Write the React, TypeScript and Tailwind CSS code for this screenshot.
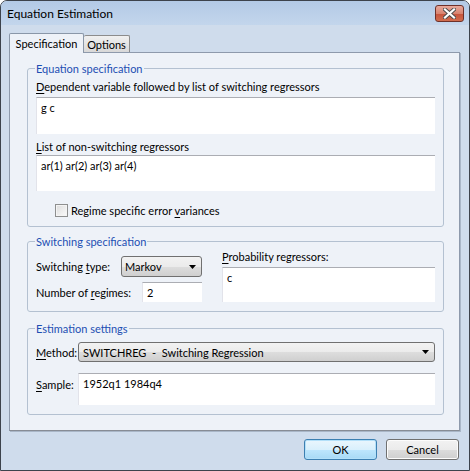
import React from 'react';

const FONT = "font-['Lato',sans-serif]";

function Edit({ className = '', text = '' }: { className?: string; text?: string }) {
    return (
        <div
            className={`whitespace-nowrap bg-white border-t border-l border-t-[#abadb3] border-l-[#e2e3ea] pl-[4px] pt-[2px] leading-[15px] text-[11px] text-black ${className}`}
        >
            {text}
        </div>
    );
}

function Combo({ className = '', text }: { className?: string; text: string }) {
    return (
        <div
            className={`flex items-center justify-between rounded-[3px] border border-[#707070] bg-[linear-gradient(#f2f2f2_0%,#ebebeb_50%,#dddddd_51%,#cfcfcf_100%)] pl-[3px] pr-[5px] text-[11px] leading-[15px] text-black ${className}`}
        >
            <span className="whitespace-pre">{text}</span>
            <svg width="7" height="4" viewBox="0 0 7 4" aria-hidden>
                <path d="M0 0H7L3.5 4Z" fill="#000" />
            </svg>
        </div>
    );
}

function Group({ title, className = '', children }: { title: string; className?: string; children: React.ReactNode }) {
    return (
        <fieldset className={`w-[417px] rounded-[3px] border border-[#b4c1d1] px-[8px] ${className}`}>
            <legend className="-ml-[1px] px-[1px] whitespace-nowrap text-[11px] leading-[15px] text-[#1d4fb3]">{title}</legend>
            {children}
        </fieldset>
    );
}

function Button({ label, isDefault = false }: { label: string; isDefault?: boolean }) {
    return (
        <button
            type="button"
            className={[
                'flex h-[21px] w-[73px] items-center justify-center rounded-[3px] border text-[11px] leading-[15px] text-black',
                isDefault
                    ? 'border-[#3c7fb1] bg-[linear-gradient(#eaf6fd_0%,#d9f0fc_50%,#bee6fd_51%,#a7d9f5_100%)] shadow-[inset_0_0_0_1px_#b3e0f9]'
                    : 'border-[#707070] bg-[linear-gradient(#f2f2f2_0%,#ebebeb_50%,#dddddd_51%,#cfcfcf_100%)] shadow-[inset_0_0_0_1px_#fcfcfc]',
            ].join(' ')}
        >
            {label}
        </button>
    );
}

const U = ({ children }: { children: React.ReactNode }) => (
    <span className="underline underline-offset-[2px] decoration-[1px]">{children}</span>
);

export default function App() {
    return (
        <div className={`${FONT} h-[471px] w-[470px] overflow-hidden whitespace-nowrap rounded-t-[7px] border border-[#3d434c] bg-[#cfdcec] text-[11px] text-black`}>
            {/* title bar */}
            <div className="flex h-[24px] items-center justify-between bg-[linear-gradient(#b3cae6,#c3d6ec)] pl-[6px] pr-[5px]">
                <span className="text-[12px] leading-[15px]">Equation Estimation</span>
                <div className="flex h-[17px] w-[29px] items-center justify-center rounded-[3px] border border-[#6e3029] bg-[linear-gradient(#e8a99c_0%,#d88470_50%,#c6533c_51%,#d06c4e_100%)]">
                    <svg width="13" height="11" viewBox="0 0 13 11" aria-hidden>
                        <path
                            d="M2 1.5L11 9.5M11 1.5L2 9.5"
                            stroke="#4b4b4b"
                            strokeWidth="4"
                            strokeLinecap="square"
                        />
                        <path d="M2 1.5L11 9.5M11 1.5L2 9.5" stroke="#fff" strokeWidth="2.2" strokeLinecap="square" />
                    </svg>
                </div>
            </div>

            <div className="pl-[8px]">
                {/* tabs */}
                <div className="mt-[8px] flex h-[19px] items-end">
                    <div className="relative z-10 -mb-px flex h-[20px] w-[75px] items-start justify-center rounded-t-[2px] border border-b-0 border-[#8a97a8] bg-[#eef2f8] pt-[2px] leading-[15px]">
                        Specification
                    </div>
                    <div className="flex h-[17px] w-[46px] items-start justify-center rounded-t-[2px] border border-b-0 border-l-0 border-[#8c8c8c] bg-[linear-gradient(#f0f0f0,#d8d8d8)] pt-[1px] leading-[15px]">
                        Options
                    </div>
                </div>

                {/* tab page */}
                <div className="w-[451px] border border-[#8e9aac] border-b-[#878c95] bg-[#eef2f8] pb-[15px] pl-[17px] pt-[8px] shadow-[1px_1px_0_#a9b6c7]">
                    <Group title="Equation specification" className="pb-[8px]">
                        <div className="pt-[3px] leading-[15px]">
                            <U>D</U>ependent variable followed by list of switching regressors
                        </div>
                        <Edit className="mt-[3px] h-[37px]" text="g c" />
                        <div className="mt-[5px] leading-[15px]">
                            <U>L</U>ist of non-switching regressors
                        </div>
                        <Edit className="mt-[1px] h-[36px]" text="ar(1) ar(2) ar(3) ar(4)" />
                        <div className="mt-[12px] ml-[19px] flex h-[15px] items-center">
                            <span className="h-[13px] w-[13px] border border-[#8e8f8f] bg-[linear-gradient(135deg,#dcdcdc,#fbfbfb)] shadow-[inset_0_0_0_1px_#f4f4f4]" />
                            <span className="ml-[3px] leading-[15px]">
                                Regime specific error <U>v</U>ariances
                            </span>
                        </div>
                    </Group>

                    <Group title="Switching specification" className="mt-[7px] pb-[9px]">
                        <div className="flex">
                            <div className="w-[166px] shrink-0 pt-[7px]">
                                <div className="flex h-[21px] items-center">
                                    <span className="w-[85px] shrink-0 leading-[15px]">
                                        Switching <U>t</U>ype:
                                    </span>
                                    <Combo className="h-[21px] w-[81px]" text="Markov" />
                                </div>
                                <div className="mt-[5px] flex h-[20px] items-center">
                                    <span className="w-[106px] shrink-0 leading-[15px]">
                                        Number of <U>r</U>egimes:
                                    </span>
                                    <Edit className="h-[20px] w-[60px]" text="2" />
                                </div>
                            </div>
                            <div className="ml-[20px] flex-1">
                                <div className="leading-[15px]">
                                    <U>P</U>robability regressors:
                                </div>
                                <Edit className="mt-[3px] h-[35px]" text="c" />
                            </div>
                        </div>
                    </Group>

                    <Group title="Estimation settings" className="mt-[9px] pb-[9px]">
                        <div className="mt-[6px] flex h-[20px] items-center">
                            <span className="w-[42px] shrink-0 leading-[15px]">
                                <U>M</U>ethod:
                            </span>
                            <Combo className="h-[20px] flex-1 pl-[4px]" text="SWITCHREG  -  Switching Regression" />
                        </div>
                        <div className="mt-[11px] flex h-[32px] items-start">
                            <span className="mt-[4px] w-[42px] shrink-0 leading-[15px]">
                                <U>S</U>ample:
                            </span>
                            <Edit className="h-[32px] flex-1" text="1952q1 1984q4" />
                        </div>
                    </Group>
                </div>

                {/* buttons */}
                <div className="mt-[8px] flex justify-end gap-[9px] pr-[10px]">
                    <Button label="OK" isDefault />
                    <Button label="Cancel" />
                </div>
            </div>
        </div>
    );
}
